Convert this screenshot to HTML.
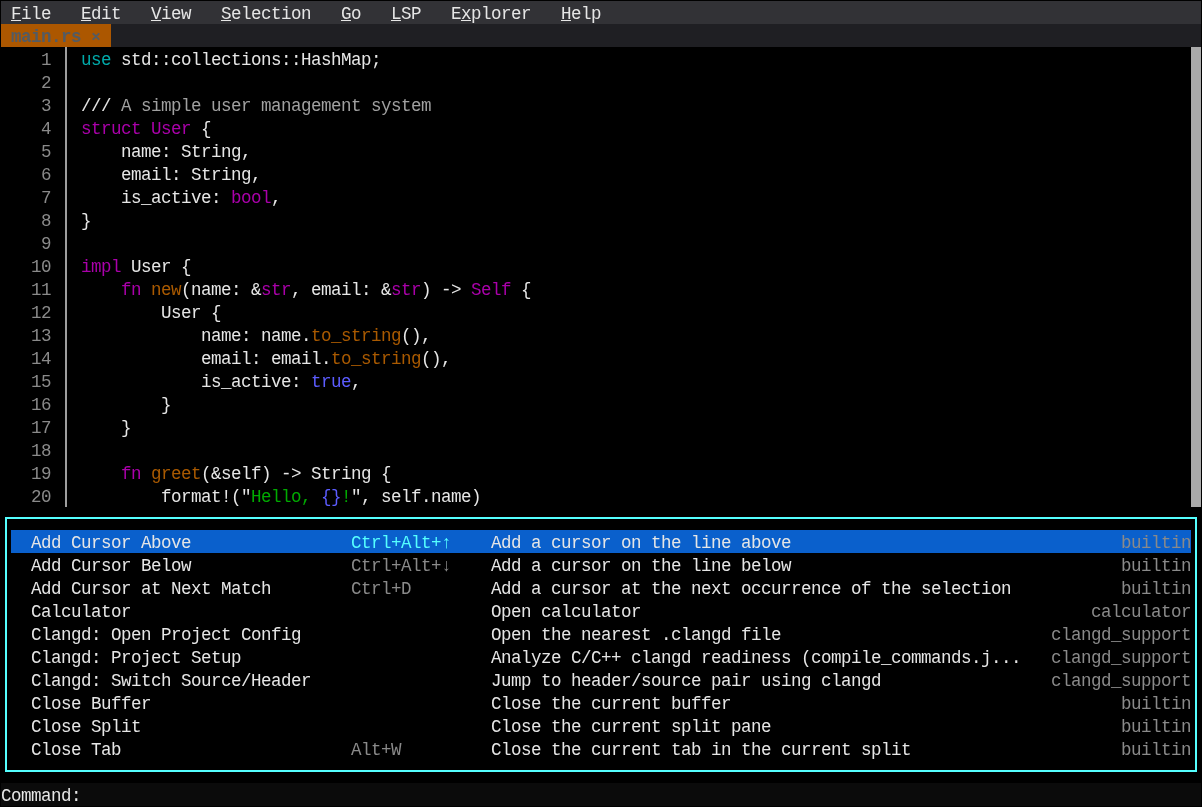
<!DOCTYPE html>
<html><head><meta charset="utf-8"><style>
html,body{margin:0;padding:0;}
body{width:1202px;height:807px;background:#000;position:relative;overflow:hidden;font-family:"Liberation Mono",monospace;}
body>div{position:absolute;}
.t{position:absolute;white-space:pre;font-size:17.5px;line-height:23px;height:23px;letter-spacing:-0.5017px;-webkit-font-smoothing:antialiased;}
body{will-change:transform;}
</style></head><body>
<div style="left:1px;top:1px;width:1200px;height:23px;background:#323236"></div>
<div style="left:1px;top:24px;width:1200px;height:23px;background:#1f1f23"></div>
<div style="left:1px;top:24px;width:110px;height:23px;background:#ac5700"></div>
<div style="left:1px;top:783px;width:1200px;height:23px;background:#0b0b0b"></div>
<span class="t" style="left:11px;top:3px;color:#e6e6e6">File</span>
<div style="left:11px;top:20px;width:10px;height:1px;background:#e6e6e6"></div>
<span class="t" style="left:81px;top:3px;color:#e6e6e6">Edit</span>
<div style="left:81px;top:20px;width:10px;height:1px;background:#e6e6e6"></div>
<span class="t" style="left:151px;top:3px;color:#e6e6e6">View</span>
<div style="left:151px;top:20px;width:10px;height:1px;background:#e6e6e6"></div>
<span class="t" style="left:221px;top:3px;color:#e6e6e6">Selection</span>
<div style="left:221px;top:20px;width:10px;height:1px;background:#e6e6e6"></div>
<span class="t" style="left:341px;top:3px;color:#e6e6e6">Go</span>
<div style="left:341px;top:20px;width:10px;height:1px;background:#e6e6e6"></div>
<span class="t" style="left:391px;top:3px;color:#e6e6e6">LSP</span>
<div style="left:391px;top:20px;width:10px;height:1px;background:#e6e6e6"></div>
<span class="t" style="left:451px;top:3px;color:#e6e6e6">Explorer</span>
<div style="left:461px;top:20px;width:10px;height:1px;background:#e6e6e6"></div>
<span class="t" style="left:561px;top:3px;color:#e6e6e6">Help</span>
<div style="left:561px;top:20px;width:10px;height:1px;background:#e6e6e6"></div>
<span class="t" style="left:11px;top:26px;color:#535b63;font-weight:bold">main.rs</span>
<svg style="position:absolute;left:0;top:0" width="120" height="50"><path d="M93.3 33.8L98.7 39.2M98.7 33.8L93.3 39.2" stroke="#535b63" stroke-width="1.9" stroke-linecap="round"/></svg>
<span class="t" style="left:41px;top:49px;color:#8a8a8a">1</span>
<span class="t" style="left:81px;top:49px;color:#00aaaa">use</span>
<span class="t" style="left:111px;top:49px;color:#e6e6e6"> std::collections::HashMap;</span>
<span class="t" style="left:41px;top:72px;color:#8a8a8a">2</span>
<span class="t" style="left:41px;top:95px;color:#8a8a8a">3</span>
<span class="t" style="left:81px;top:95px;color:#e6e6e6">///</span>
<span class="t" style="left:111px;top:95px;color:#a0a0a0"> A simple user management system</span>
<span class="t" style="left:41px;top:118px;color:#8a8a8a">4</span>
<span class="t" style="left:81px;top:118px;color:#aa00aa">struct</span>
<span class="t" style="left:151px;top:118px;color:#aa00aa">User</span>
<span class="t" style="left:191px;top:118px;color:#e6e6e6"> {</span>
<span class="t" style="left:41px;top:141px;color:#8a8a8a">5</span>
<span class="t" style="left:81px;top:141px;color:#e6e6e6">    name: String,</span>
<span class="t" style="left:41px;top:164px;color:#8a8a8a">6</span>
<span class="t" style="left:81px;top:164px;color:#e6e6e6">    email: String,</span>
<span class="t" style="left:41px;top:187px;color:#8a8a8a">7</span>
<span class="t" style="left:81px;top:187px;color:#e6e6e6">    is_active: </span>
<span class="t" style="left:231px;top:187px;color:#aa00aa">bool</span>
<span class="t" style="left:271px;top:187px;color:#e6e6e6">,</span>
<span class="t" style="left:41px;top:210px;color:#8a8a8a">8</span>
<span class="t" style="left:81px;top:210px;color:#e6e6e6">}</span>
<span class="t" style="left:41px;top:233px;color:#8a8a8a">9</span>
<span class="t" style="left:31px;top:256px;color:#8a8a8a">10</span>
<span class="t" style="left:81px;top:256px;color:#aa00aa">impl</span>
<span class="t" style="left:121px;top:256px;color:#e6e6e6"> User {</span>
<span class="t" style="left:31px;top:279px;color:#8a8a8a">11</span>
<span class="t" style="left:121px;top:279px;color:#aa00aa">fn</span>
<span class="t" style="left:151px;top:279px;color:#aa5a00">new</span>
<span class="t" style="left:181px;top:279px;color:#e6e6e6">(name: &amp;</span>
<span class="t" style="left:261px;top:279px;color:#aa00aa">str</span>
<span class="t" style="left:291px;top:279px;color:#e6e6e6">, email: &amp;</span>
<span class="t" style="left:391px;top:279px;color:#aa00aa">str</span>
<span class="t" style="left:421px;top:279px;color:#e6e6e6">) -&gt; </span>
<span class="t" style="left:471px;top:279px;color:#aa00aa">Self</span>
<span class="t" style="left:511px;top:279px;color:#e6e6e6"> {</span>
<span class="t" style="left:31px;top:302px;color:#8a8a8a">12</span>
<span class="t" style="left:81px;top:302px;color:#e6e6e6">        User {</span>
<span class="t" style="left:31px;top:325px;color:#8a8a8a">13</span>
<span class="t" style="left:81px;top:325px;color:#e6e6e6">            name: name.</span>
<span class="t" style="left:311px;top:325px;color:#aa5a00">to_string</span>
<span class="t" style="left:401px;top:325px;color:#e6e6e6">(),</span>
<span class="t" style="left:31px;top:348px;color:#8a8a8a">14</span>
<span class="t" style="left:81px;top:348px;color:#e6e6e6">            email: email.</span>
<span class="t" style="left:331px;top:348px;color:#aa5a00">to_string</span>
<span class="t" style="left:421px;top:348px;color:#e6e6e6">(),</span>
<span class="t" style="left:31px;top:371px;color:#8a8a8a">15</span>
<span class="t" style="left:81px;top:371px;color:#e6e6e6">            is_active: </span>
<span class="t" style="left:311px;top:371px;color:#5c5cff">true</span>
<span class="t" style="left:351px;top:371px;color:#e6e6e6">,</span>
<span class="t" style="left:31px;top:394px;color:#8a8a8a">16</span>
<span class="t" style="left:81px;top:394px;color:#e6e6e6">        }</span>
<span class="t" style="left:31px;top:417px;color:#8a8a8a">17</span>
<span class="t" style="left:81px;top:417px;color:#e6e6e6">    }</span>
<span class="t" style="left:31px;top:440px;color:#8a8a8a">18</span>
<span class="t" style="left:31px;top:463px;color:#8a8a8a">19</span>
<span class="t" style="left:121px;top:463px;color:#aa00aa">fn</span>
<span class="t" style="left:151px;top:463px;color:#aa5a00">greet</span>
<span class="t" style="left:201px;top:463px;color:#e6e6e6">(&amp;self) -&gt; String {</span>
<span class="t" style="left:31px;top:486px;color:#8a8a8a">20</span>
<span class="t" style="left:81px;top:486px;color:#e6e6e6">        format!(&quot;</span>
<span class="t" style="left:251px;top:486px;color:#00aa00">Hello, </span>
<span class="t" style="left:321px;top:486px;color:#5c5cff">{}</span>
<span class="t" style="left:341px;top:486px;color:#00aa00">!</span>
<span class="t" style="left:351px;top:486px;color:#e6e6e6">&quot;, self.name)</span>
<div style="left:65px;top:47px;width:2px;height:460px;background:#9e9e9e"></div>
<div style="left:1191px;top:47px;width:10px;height:460px;background:#aaaaaa"></div>
<div style="left:5px;top:517px;width:1192px;height:2px;background:#55ffff"></div>
<div style="left:5px;top:770px;width:1192px;height:2px;background:#55ffff"></div>
<div style="left:5px;top:517px;width:2px;height:255px;background:#55ffff"></div>
<div style="left:1195px;top:517px;width:2px;height:255px;background:#55ffff"></div>
<div style="left:11px;top:530px;width:1180px;height:23px;background:#0a60cc"></div>
<span class="t" style="left:31px;top:532px;color:#e6e6e6">Add Cursor Above</span>
<span class="t" style="left:351px;top:532px;color:#55ffff">Ctrl+Alt+↑</span>
<span class="t" style="left:491px;top:532px;color:#e6e6e6">Add a cursor on the line above</span>
<span class="t" style="left:1121px;top:532px;color:#8a8a8a">builtin</span>
<span class="t" style="left:31px;top:555px;color:#e6e6e6">Add Cursor Below</span>
<span class="t" style="left:351px;top:555px;color:#8a8a8a">Ctrl+Alt+↓</span>
<span class="t" style="left:491px;top:555px;color:#e6e6e6">Add a cursor on the line below</span>
<span class="t" style="left:1121px;top:555px;color:#8a8a8a">builtin</span>
<span class="t" style="left:31px;top:578px;color:#e6e6e6">Add Cursor at Next Match</span>
<span class="t" style="left:351px;top:578px;color:#8a8a8a">Ctrl+D</span>
<span class="t" style="left:491px;top:578px;color:#e6e6e6">Add a cursor at the next occurrence of the selection</span>
<span class="t" style="left:1121px;top:578px;color:#8a8a8a">builtin</span>
<span class="t" style="left:31px;top:601px;color:#e6e6e6">Calculator</span>
<span class="t" style="left:491px;top:601px;color:#e6e6e6">Open calculator</span>
<span class="t" style="left:1091px;top:601px;color:#8a8a8a">calculator</span>
<span class="t" style="left:31px;top:624px;color:#e6e6e6">Clangd: Open Project Config</span>
<span class="t" style="left:491px;top:624px;color:#e6e6e6">Open the nearest .clangd file</span>
<span class="t" style="left:1051px;top:624px;color:#8a8a8a">clangd_support</span>
<span class="t" style="left:31px;top:647px;color:#e6e6e6">Clangd: Project Setup</span>
<span class="t" style="left:491px;top:647px;color:#e6e6e6">Analyze C/C++ clangd readiness (compile_commands.j...</span>
<span class="t" style="left:1051px;top:647px;color:#8a8a8a">clangd_support</span>
<span class="t" style="left:31px;top:670px;color:#e6e6e6">Clangd: Switch Source/Header</span>
<span class="t" style="left:491px;top:670px;color:#e6e6e6">Jump to header/source pair using clangd</span>
<span class="t" style="left:1051px;top:670px;color:#8a8a8a">clangd_support</span>
<span class="t" style="left:31px;top:693px;color:#e6e6e6">Close Buffer</span>
<span class="t" style="left:491px;top:693px;color:#e6e6e6">Close the current buffer</span>
<span class="t" style="left:1121px;top:693px;color:#8a8a8a">builtin</span>
<span class="t" style="left:31px;top:716px;color:#e6e6e6">Close Split</span>
<span class="t" style="left:491px;top:716px;color:#e6e6e6">Close the current split pane</span>
<span class="t" style="left:1121px;top:716px;color:#8a8a8a">builtin</span>
<span class="t" style="left:31px;top:739px;color:#e6e6e6">Close Tab</span>
<span class="t" style="left:351px;top:739px;color:#8a8a8a">Alt+W</span>
<span class="t" style="left:491px;top:739px;color:#e6e6e6">Close the current tab in the current split</span>
<span class="t" style="left:1121px;top:739px;color:#8a8a8a">builtin</span>
<span class="t" style="left:1px;top:785px;color:#e6e6e6">Command:</span>
</body></html>
